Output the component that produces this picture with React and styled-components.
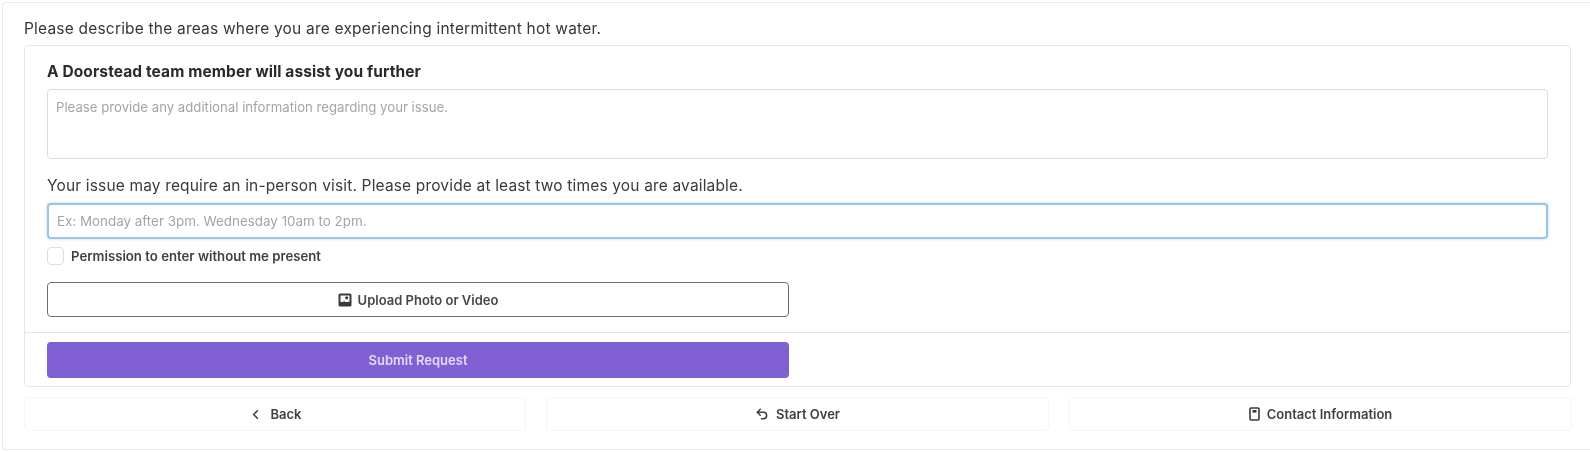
import React from "react";
import styled, { createGlobalStyle } from "styled-components";
import { ChevronLeft, Undo2 } from "lucide-react";

const Global = createGlobalStyle`
  html, body { margin: 0; padding: 0; background: #fff; }
  body { font-family: Inter, "Liberation Sans", sans-serif; color: #2b2b30; }
  * { box-sizing: border-box; }
`;

const Page = styled.div`
  width: 1590px;
  height: 452px;
  padding-top: 2px;
  filter: blur(0.7px);
`;

const Shell = styled.main`
  margin-left: 2px;
  width: 1588px;
  height: 448px;
  padding: 15px 20px 0 21px;
  border: 1px solid #e8e8e8;
  border-right: none;
  border-radius: 4px 0 0 4px;
`;

const Intro = styled.p`
  margin: 0;
  height: 27px;
  line-height: 22px;
  font-size: 15.5px;
  letter-spacing: 0.2px;
  color: #37373c;
`;

const Card = styled.section`
  width: 1547px;
  height: 342px;
  border: 1px solid #e6e6e8;
  border-radius: 4px;
  display: flex;
  flex-direction: column;
`;

const CardBody = styled.div`
  height: 287px;
  padding: 17px 22px 0;
  border-bottom: 1px solid #e6e6e8;
`;

const Heading = styled.h2`
  margin: 0;
  height: 26px;
  font-size: 15.5px;
  line-height: 18px;
  letter-spacing: 0.1px;
  font-weight: 700;
  color: #2a2a2e;
`;

const TextArea = styled.textarea`
  display: block;
  width: 1501px;
  height: 70px;
  padding: 9px 8px;
  resize: none;
  border: 1px solid #dcdcde;
  border-radius: 4px;
  outline: none;
  font: 400 13.2px/16px Inter, sans-serif;
  &::placeholder { color: #a5a5a9; opacity: 1; }
`;

const Prompt = styled.label`
  display: block;
  margin-top: 17px;
  height: 27px;
  font-size: 15.5px;
  line-height: 20px;
  letter-spacing: 0.16px;
  color: #3a3a3f;
`;

const TimesInput = styled.input`
  display: block;
  width: 1501px;
  height: 36px;
  padding: 0 8px;
  border: 2px solid #9cc4e8;
  border-radius: 4px;
  outline: none;
  box-shadow: 0 0 3px rgba(120, 170, 225, 0.55);
  font: 400 13.4px Inter, sans-serif;
  &::placeholder { color: #a5a5a9; opacity: 1; }
`;

const CheckRow = styled.label`
  display: flex;
  align-items: center;
  gap: 7px;
  margin-top: 8px;
  height: 18px;
  font-size: 13.2px;
  font-weight: 600;
  color: #3f3f44;
`;

const CheckBox = styled.span`
  width: 17px;
  height: 18px;
  border: 1px solid #dedee0;
  border-radius: 4px;
`;

const WideButton = styled.button`
  display: flex;
  align-items: center;
  justify-content: center;
  gap: 6px;
  width: 742px;
  height: 36px;
  border-radius: 4px;
  font: 600 13px Inter, sans-serif;
  cursor: pointer;
`;

const UploadButton = styled(WideButton)`
  margin-top: 17px;
  height: 35px;
  background: #fff;
  border: 1px solid #6f6f73;
  color: #46464b;
`;

const CardFoot = styled.div`
  padding: 9px 22px 0;
`;

const SubmitButton = styled(WideButton)`
  background: #8060d2;
  border: none;
  color: #e3daf6;
`;

const NavRow = styled.nav`
  display: grid;
  grid-template-columns: 502px 503px 503px;
  gap: 20px;
  margin-top: 10px;
  width: 1547px;
`;

const NavButton = styled.button`
  display: flex;
  align-items: center;
  justify-content: center;
  gap: 7px;
  height: 34px;
  background: #fff;
  border: 1px solid #f5f5f6;
  border-radius: 4px;
  font: 600 13px Inter, sans-serif;
  color: #3f3f44;
  cursor: pointer;
`;

const PhotoIcon = () => (
  <svg width="14" height="14" viewBox="0 0 14 14" aria-hidden="true">
    <rect x="0.5" y="0.5" width="13" height="13" rx="1.5" fill="#3a3a3e" />
    <rect x="2.5" y="2.5" width="9" height="6.5" fill="#fff" />
    <path d="M2.5 11.5 L6 8 L8.5 10 L11.5 8 V11.5 Z" fill="#3a3a3e" />
    <circle cx="8.7" cy="4.8" r="1.6" fill="#3a3a3e" />
  </svg>
);

const ContactIcon = () => (
  <svg width="11" height="14" viewBox="0 0 11 14" fill="none" aria-hidden="true">
    <rect x="1" y="1" width="9" height="12" rx="1" stroke="#3a3a3e" strokeWidth="1.6" />
    <rect x="3.5" y="3" width="4" height="2.6" fill="#3a3a3e" />
  </svg>
);

export default function App() {
  return (
    <Page>
      <Global />
      <Shell>
        <Intro>Please describe the areas where you are experiencing intermittent hot water.</Intro>
        <Card>
          <CardBody>
            <Heading>A Doorstead team member will assist you further</Heading>
            <TextArea placeholder="Please provide any additional information regarding your issue." />
            <Prompt>Your issue may require an in-person visit. Please provide at least two times you are available.</Prompt>
            <TimesInput placeholder="Ex: Monday after 3pm. Wednesday 10am to 2pm." />
            <CheckRow>
              <CheckBox />
              Permission to enter without me present
            </CheckRow>
            <UploadButton type="button">
              <PhotoIcon />
              Upload Photo or Video
            </UploadButton>
          </CardBody>
          <CardFoot>
            <SubmitButton type="button">Submit Request</SubmitButton>
          </CardFoot>
        </Card>
        <NavRow>
          <NavButton type="button">
            <ChevronLeft size={15} strokeWidth={2.6} />
            Back
          </NavButton>
          <NavButton type="button">
            <Undo2 size={14} strokeWidth={2.6} />
            Start Over
          </NavButton>
          <NavButton type="button">
            <ContactIcon />
            Contact Information
          </NavButton>
        </NavRow>
      </Shell>
    </Page>
  );
}
